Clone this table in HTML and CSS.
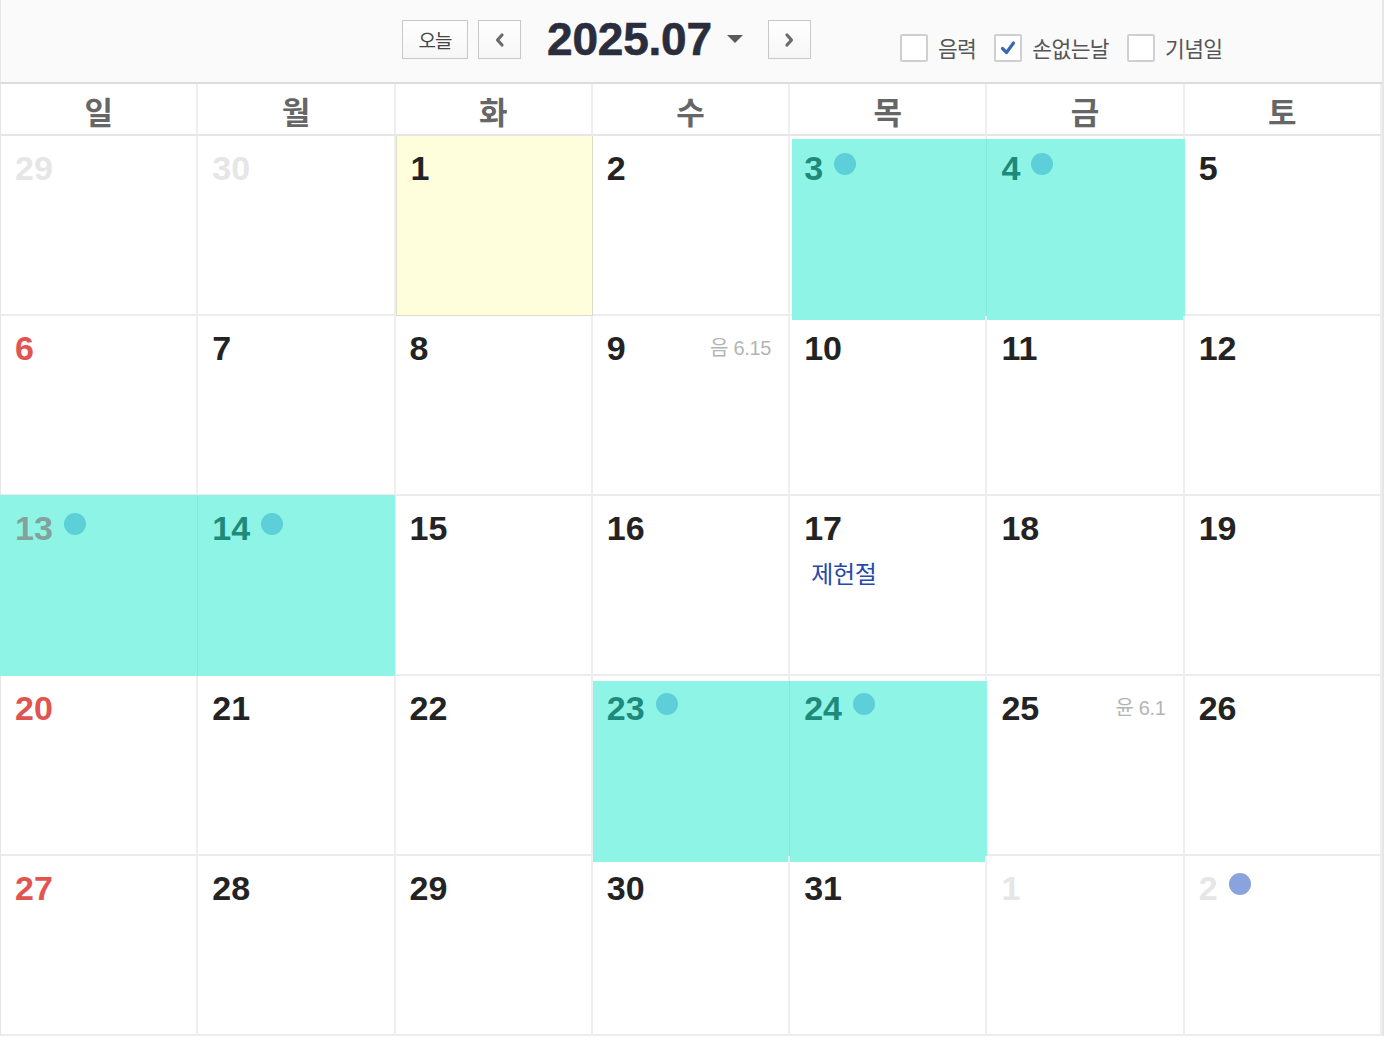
FILE: index.html
```html
<!DOCTYPE html>
<html lang="ko">
<head>
<meta charset="utf-8">
<title>달력 2025.07</title>
<link rel="stylesheet" href="styles.css">
</head>
<body>
<div class="calendar">
  <div class="toolbar">
    <div class="nav">
      <button class="btn btn-today">오늘</button>
      <button class="btn btn-arrow" aria-label="이전">
        <svg width="12" height="16" viewBox="0 0 12 16"><polyline points="8,3 3.5,8 8,13" fill="none" stroke="#6b6b6b" stroke-width="3.2" stroke-linecap="round" stroke-linejoin="round"/></svg>
      </button>
      <div class="title">2025.07</div>
      <span class="caret"></span>
      <button class="btn btn-arrow" aria-label="다음">
        <svg width="12" height="16" viewBox="0 0 12 16"><polyline points="4,3 8.5,8 4,13" fill="none" stroke="#6b6b6b" stroke-width="3.2" stroke-linecap="round" stroke-linejoin="round"/></svg>
      </button>
    </div>
    <div class="options">
      <label class="opt"><span class="box"></span><span class="opt-text">음력</span></label>
      <label class="opt"><span class="box checked"><svg width="18" height="18" viewBox="0 0 18 18"><polyline points="3.5,9.5 7.5,13.5 14.5,4" fill="none" stroke="#3d67b6" stroke-width="3.2" stroke-linecap="round" stroke-linejoin="round"/></svg></span><span class="opt-text">손없는날</span></label>
      <label class="opt"><span class="box"></span><span class="opt-text">기념일</span></label>
    </div>
  </div>

  <div class="grid">
    <div class="wd">일</div><div class="wd">월</div><div class="wd">화</div><div class="wd">수</div><div class="wd">목</div><div class="wd">금</div><div class="wd">토</div>

    <div class="cell"><div class="top"><span class="num other">29</span></div></div>
    <div class="cell"><div class="top"><span class="num other">30</span></div></div>
    <div class="cell today"><div class="top"><span class="num">1</span></div></div>
    <div class="cell"><div class="top"><span class="num">2</span></div></div>
    <div class="cell hl hl-a hl-left"><div class="top"><span class="num">3</span><span class="dot"></span></div></div>
    <div class="cell hl hl-a hl-right"><div class="top"><span class="num">4</span><span class="dot"></span></div></div>
    <div class="cell"><div class="top"><span class="num">5</span></div></div>

    <div class="cell"><div class="top"><span class="num sun">6</span></div></div>
    <div class="cell"><div class="top"><span class="num">7</span></div></div>
    <div class="cell"><div class="top"><span class="num">8</span></div></div>
    <div class="cell"><div class="top"><span class="num">9</span><span class="lunar">음 6.15</span></div></div>
    <div class="cell"><div class="top"><span class="num">10</span></div></div>
    <div class="cell"><div class="top"><span class="num">11</span></div></div>
    <div class="cell"><div class="top"><span class="num">12</span></div></div>

    <div class="cell hl hl-b hl-left"><div class="top"><span class="num sun">13</span><span class="dot"></span></div></div>
    <div class="cell hl hl-b hl-right"><div class="top"><span class="num">14</span><span class="dot"></span></div></div>
    <div class="cell"><div class="top"><span class="num">15</span></div></div>
    <div class="cell"><div class="top"><span class="num">16</span></div></div>
    <div class="cell"><div class="top"><span class="num">17</span></div><div class="holiday">제헌절</div></div>
    <div class="cell"><div class="top"><span class="num">18</span></div></div>
    <div class="cell"><div class="top"><span class="num">19</span></div></div>

    <div class="cell"><div class="top"><span class="num sun">20</span></div></div>
    <div class="cell"><div class="top"><span class="num">21</span></div></div>
    <div class="cell"><div class="top"><span class="num">22</span></div></div>
    <div class="cell hl hl-c hl-left"><div class="top"><span class="num">23</span><span class="dot"></span></div></div>
    <div class="cell hl hl-c hl-right"><div class="top"><span class="num">24</span><span class="dot"></span></div></div>
    <div class="cell"><div class="top"><span class="num">25</span><span class="lunar">윤 6.1</span></div></div>
    <div class="cell"><div class="top"><span class="num">26</span></div></div>

    <div class="cell"><div class="top"><span class="num sun">27</span></div></div>
    <div class="cell"><div class="top"><span class="num">28</span></div></div>
    <div class="cell"><div class="top"><span class="num">29</span></div></div>
    <div class="cell"><div class="top"><span class="num">30</span></div></div>
    <div class="cell"><div class="top"><span class="num">31</span></div></div>
    <div class="cell"><div class="top"><span class="num other">1</span></div></div>
    <div class="cell"><div class="top"><span class="num other">2</span><span class="dot dot-blue"></span></div></div>
  </div>
</div>
</body>
</html>
```
FILE: styles.css
```css
* { box-sizing: border-box; }
html, body { margin: 0; padding: 0; background: #ffffff; }
body {
  font-family: "Liberation Sans", "Noto Sans CJK KR", Arial, sans-serif;
  color: #222;
}
.calendar {
  width: 1384px;
  border-right: 2px solid #e6e6e6;
}
.toolbar {
  height: 84px;
  background: #fafafa;
  border-bottom: 2px solid #dcdcdc;
  border-left: 1px solid #e6e6e6;
  display: flex;
  align-items: flex-start;
  padding-left: 401px;
}
.nav {
  display: flex;
  align-items: center;
  margin-top: 20px;
}
.btn {
  height: 39px;
  border: 1px solid #c8c8c8;
  background: linear-gradient(#ffffff, #f6f6f6);
  padding: 0;
  display: flex;
  align-items: center;
  justify-content: center;
  cursor: pointer;
}
.btn-today {
  width: 66px;
  font-family: "Noto Sans CJK KR", sans-serif;
  font-size: 19px;
  color: #444;
  letter-spacing: -1px;
}
.btn-arrow { width: 43px; }
.btn-today + .btn-arrow { margin-left: 10px; }
.title {
  margin-left: 26px;
  font-family: "Liberation Sans", Arial, sans-serif;
  font-weight: bold;
  font-size: 46px;
  line-height: 39px;
  color: #2a2e3c;
  letter-spacing: -0.2px;
  -webkit-text-stroke: 0.6px #2a2e3c;
}
.caret {
  margin-left: 15px;
  width: 0; height: 0;
  border-left: 8px solid transparent;
  border-right: 8px solid transparent;
  border-top: 8px solid #5a5a5a;
  margin-top: -2px;
}
.caret + .btn { margin-left: 25px; }
.options {
  display: flex;
  align-items: center;
  gap: 18px;
  margin-left: 89px;
  margin-top: 32px;
}
.opt {
  display: flex;
  align-items: center;
  gap: 10px;
}
.box {
  width: 28px; height: 28px;
  border: 2px solid #d0d0d0;
  background: #fff;
  border-radius: 2px;
  display: flex;
  align-items: center;
  justify-content: center;
}
.opt-text {
  font-family: "Noto Sans CJK KR", sans-serif;
  font-size: 21.5px;
  letter-spacing: -0.6px;
  color: #555;
}

.grid {
  display: grid;
  grid-template-columns: repeat(7, 1fr);
  grid-template-rows: 52px repeat(5, 180px);
  border-left: 1px solid #e6e6e6;
}
.wd {
  border-right: 2px solid #efefef;
  border-bottom: 2px solid #e6e6e6;
  display: flex;
  align-items: center;
  justify-content: center;
  font-family: "Noto Sans CJK KR", sans-serif;
  font-weight: bold;
  font-size: 31px;
  color: #666;
  padding-top: 2px;
}
.cell {
  position: relative;
  border-right: 2px solid #efefef;
  border-bottom: 2px solid #ececec;
  padding: 15px 17px 0 14px;
}
.cell > * { position: relative; z-index: 1; }
.today {
  background: #fefedd;
  border: 1px solid #dcdcc8;
  border-top: none;
}
.hl::before {
  content: "";
  position: absolute;
  z-index: 0;
  background: #8ef5e6;
}
.hl-left::before { border-right: 1px solid #84e8da; }
.hl-a.hl-left::before { left: 2px; right: -2px; top: 3px; bottom: -6px; }
.hl-a.hl-right::before { left: 0; right: -2px; top: 3px; bottom: -6px; }
.hl-b.hl-left::before { left: -1px; right: -2px; top: -1px; bottom: -2px; }
.hl-b.hl-right::before { left: 0; right: -1px; top: -1px; bottom: -2px; }
.hl-c.hl-left::before { left: 0; right: -2px; top: 5px; bottom: -8px; }
.hl-c.hl-right::before { left: 0; right: -2px; top: 5px; bottom: -8px; }
.hl .num { color: #1e8a7b; }
.hl .num.sun { color: #83a29b; }
.top {
  display: flex;
  align-items: flex-start;
}
.num {
  font-family: "Liberation Sans", Arial, sans-serif;
  font-weight: bold;
  font-size: 34px;
  line-height: 34px;
  color: #232323;
}
.num.sun { color: #e25450; }
.num.other { color: #e6e6e6; }
.dot {
  width: 22px;
  height: 22px;
  border-radius: 50%;
  background: #5ccfd8;
  margin-left: 11px;
  margin-top: 2px;
}
.dot-blue { background: #8aa3dc; }
.lunar {
  margin-left: auto;
  font-family: "Liberation Sans", "Noto Sans CJK KR", sans-serif;
  font-size: 20px;
  line-height: 34px;
  color: #b4b4b4;
  letter-spacing: -0.3px;
}
.holiday {
  margin-top: 12px;
  padding-left: 7px;
  font-family: "Noto Sans CJK KR", sans-serif;
  font-size: 24px;
  line-height: 32px;
  color: #2848a8;
  letter-spacing: -0.3px;
}
```
